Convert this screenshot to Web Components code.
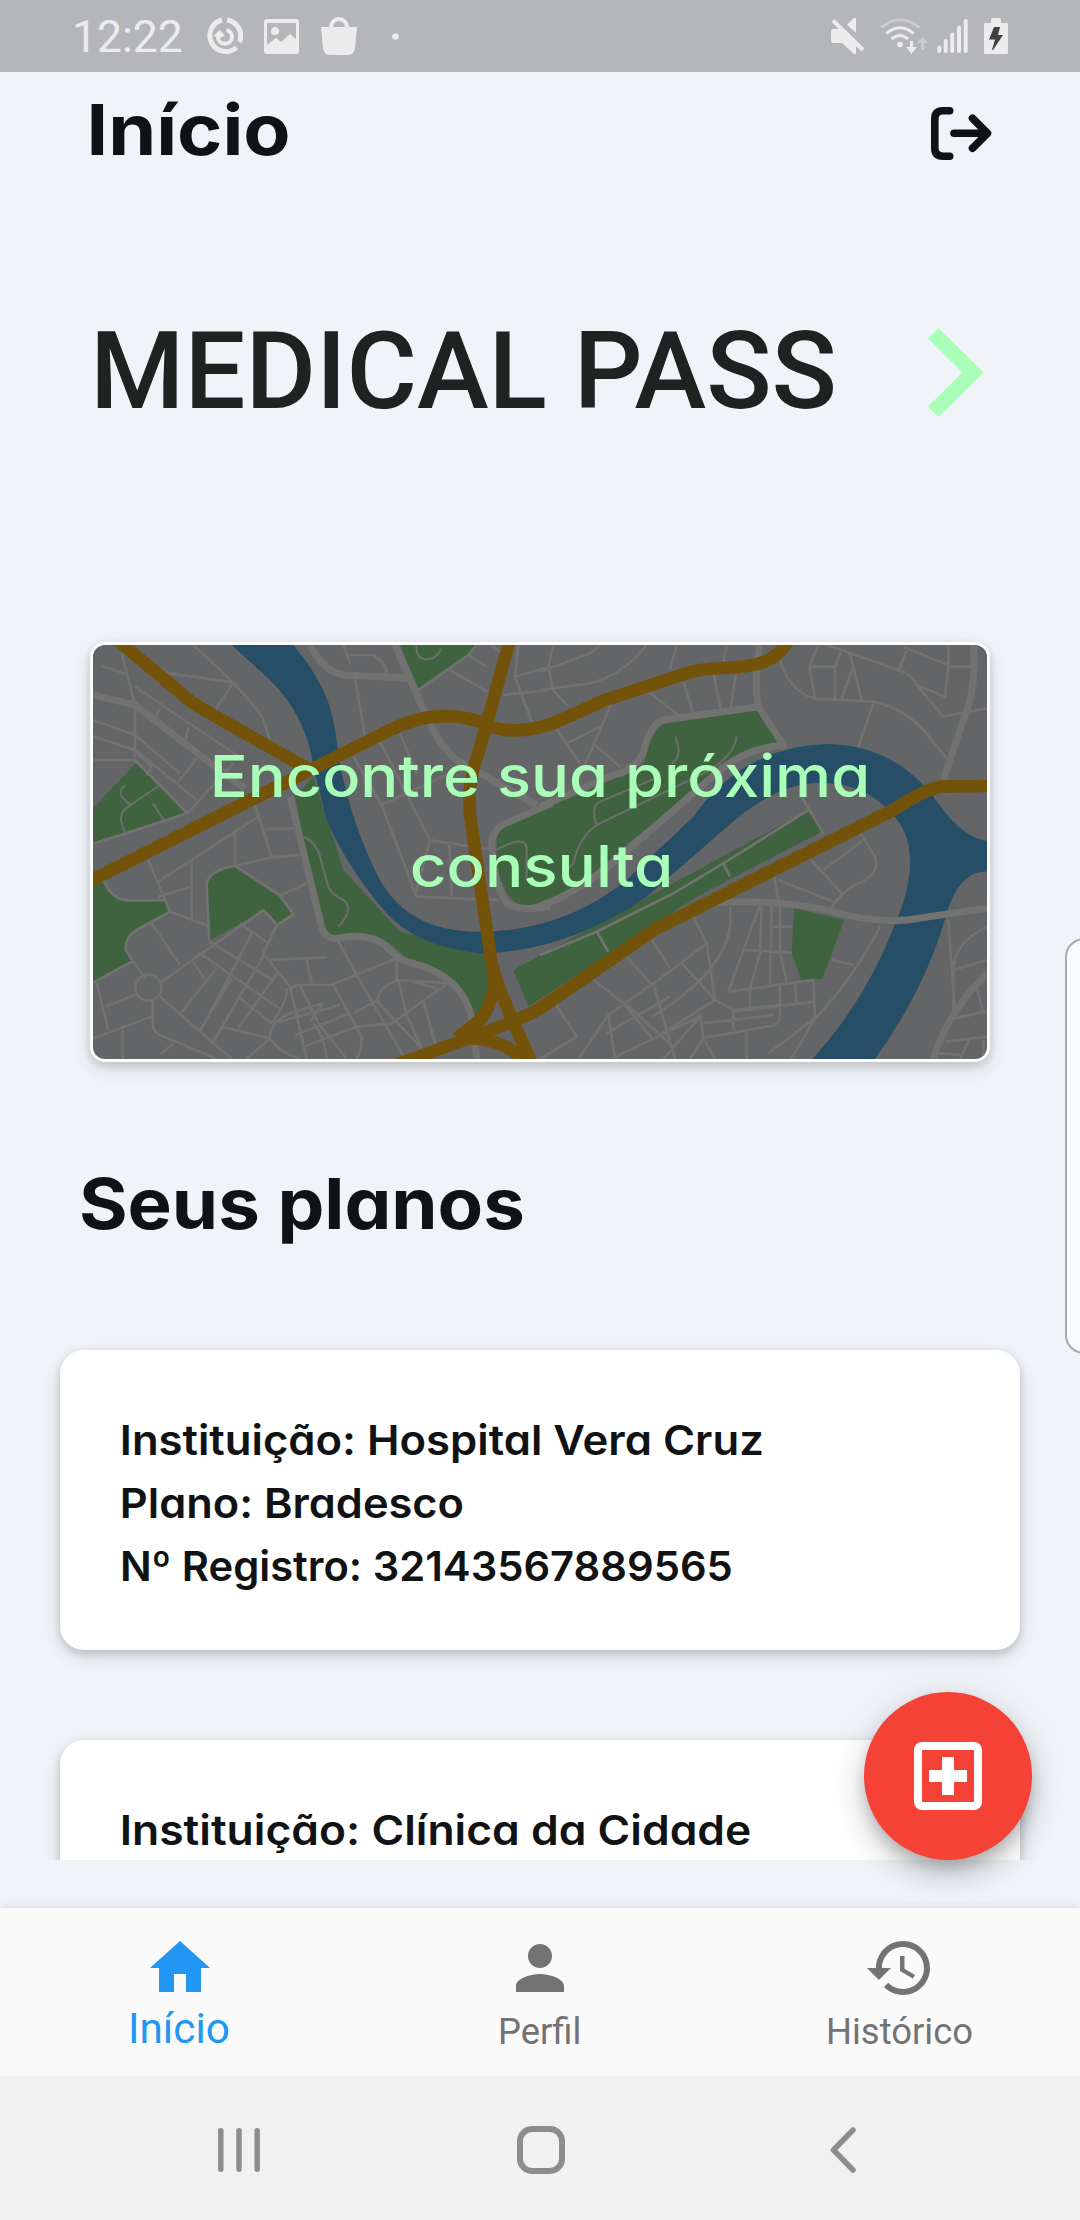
<!DOCTYPE html>
<html lang="pt-BR">
<head>
<meta charset="utf-8">
<title>Medical Pass</title>
<style>
html,body{margin:0;padding:0;background:#f0f3f8}
body{width:1080px;height:2220px;overflow:hidden;font-family:Inter,"Noto Sans",sans-serif;color:#111213}
</style>
</head>
<body>
<medical-app></medical-app>
<script>
const define=(name,html,init)=>{
  const t=document.createElement('template');
  t.innerHTML=html;
  customElements.define(name,class extends HTMLElement{
    constructor(){super();this.attachShadow({mode:'open'}).append(t.content.cloneNode(true));}
    connectedCallback(){if(init)init.call(this,this.shadowRoot);}
  });
};

/* One line of text whose drawn width is set by the "ink" attribute. */
const pen=document.createElement('canvas').getContext('2d');
define('fit-text',`<style>:host{display:block;white-space:nowrap;font-feature-settings:"cv11"}
span{display:inline-block;transform-origin:0 50%}</style><span><slot></slot></span>`,function(root){
  const s=root.querySelector('span'),c=getComputedStyle(s),target=+this.getAttribute('ink');
  const txt=root.querySelector('slot').assignedNodes({flatten:true}).map(n=>n.textContent).join('').trim();
  if(!txt||!target)return;
  pen.font=`${c.fontWeight} ${c.fontSize} ${c.fontFamily}`;
  const a=pen.measureText(txt[0]),b=pen.measureText(txt[txt.length-1]);
  const lsb=-a.actualBoundingBoxLeft,rsb=b.width-b.actualBoundingBoxRight;
  const k=target/(s.getBoundingClientRect().width-lsb-rsb);
  this.style.width=target+'px';
  s.style.transform=`translateX(${-lsb*k}px) scaleX(${k})`;
});

define('status-bar',`<style>
:host{display:flex;box-sizing:border-box;height:72px;background:#b5b6ba;color:#ececec;padding:0 72px 0 75px;justify-content:space-between;align-items:center;font:400 45px/72px Roboto,sans-serif}
div{display:flex;align-items:center}svg{display:block;fill:currentColor}
fit-text{padding-top:1px}
.l svg:nth-of-type(1){margin-left:24px}.l svg:nth-of-type(2){margin-left:21px}.l svg:nth-of-type(3){margin-left:22px}.l svg:nth-of-type(4){margin-left:35px}
.r svg:nth-of-type(2){margin-left:15px}.r svg:nth-of-type(3){margin-left:9px}.r svg:nth-of-type(4){margin-left:15px}
</style>
<div class="l"><fit-text ink="106.500">12:22</fit-text>
<svg width="37" height="38" viewBox="0 0 37 38"><g fill="none" stroke="currentColor"><path stroke-width="5" d="M16 3A16 16 0 1 0 30.5 30.500M21 3A16 16 0 0 1 33.500 25"/><path stroke-width="4" d="M20.500 13A7 7 0 1 1 12 20"/></g><path d="M7.500 19 13.500 13 19 18.500 14 21Z"/></svg>
<svg width="35" height="35" viewBox="0 0 35 35"><path fill-rule="evenodd" d="M3 0h29a3 3 0 0 1 3 3v29a3 3 0 0 1-3 3H3a3 3 0 0 1-3-3V3a3 3 0 0 1 3-3zM3 4v22l9-7 5 4 9-8 6 5V4z"/><circle cx="11" cy="12" r="4"/></svg>
<svg width="36" height="38" viewBox="0 0 36 38"><path d="M0 10h36l-2 21q-1 7-7 7H9q-6 0-7-7z"/><path d="M10 12V10a8 8 0 0 1 16 0v2" fill="none" stroke="currentColor" stroke-width="4"/></svg>
<svg width="7" height="7" viewBox="0 0 7 7"><circle cx="3.500" cy="3.500" r="3.300"/></svg></div>
<div class="r">
<svg width="34" height="36" viewBox="0 0 34 36"><path d="M2 11h7l16 16v9h-2L11 25H2q-2 0-2-2V13q0-2 2-2zM23 0h2v15l-9-8.500z"/><path d="M4 .5 34 30" stroke="#b5b6ba" stroke-width="4"/><path d="M2 2.500 32 32" stroke="currentColor" stroke-width="4"/></svg>
<svg width="48" height="36" viewBox="0 0 48 36"><g fill="none" stroke="currentColor" stroke-width="3"><path stroke="#cbccce" d="M1 9.500Q20-6 39.500 9.500"/><path d="M6.500 15.500Q20 4 33.500 15.500M11.500 21Q20 14 28 21"/></g><circle cx="20" cy="26.500" r="2.700"/><path d="M30 23h3v6h4l-5.500 7L26 29h4z"/><path fill="#cbccce" d="M41 32h3v-7h4l-5.500-6.500L37 25h4z"/></svg>
<svg width="32" height="34" viewBox="0 0 32 34"><path stroke="currentColor" stroke-width="4" stroke-linecap="round" d="M2.200 28.500v3.500M8.700 22v10M15.200 15.500v16.500M22 8.500v23.500M28.700 2v30"/></svg>
<svg width="24" height="36" viewBox="0 0 24 36"><path d="M7 1.500Q7 0 8.500 0h7Q17 0 17 1.500V5h5.500Q24 5 24 6.500v28q0 1.500-1.500 1.500h-21Q0 36 0 34.500v-28Q0 5 1.500 5H7z"/><path fill="#404040" d="M10 9h6l-2 8h5L9 32h-1l3-10.500H5z"/></svg>
</div>`);

define('page-header',`<style>
:host{display:flex;justify-content:space-between;align-items:center;box-sizing:border-box;height:100px;margin-top:8px;padding:0 88px 0 91px;font:700 70px/100px Inter,sans-serif}
svg{display:block;margin-top:7px}
</style><fit-text ink="197.500"><slot></slot></fit-text>
<svg width="61" height="53" viewBox="0 0 61 53" fill="none" stroke="#111213" stroke-width="7.600" stroke-linecap="round" stroke-linejoin="round"><path d="M18.700 3.800H12Q3.800 3.800 3.800 12V41Q3.800 49.200 12 49.200H18.700M23 26.300H56M41.500 11.300 56.500 26.300 41.500 41.300"/></svg>`);

define('brand-row',`<style>
:host{display:flex;justify-content:space-between;align-items:center;margin-top:131px;height:120px;padding:0 96px 0 97px;color:#202221;font:500 108px/120px Roboto,sans-serif}
svg{display:block;margin-top:2px}
</style><fit-text ink="736.500"><slot></slot></fit-text>
<svg width="56" height="89" viewBox="0 0 56 89"><path fill="#aaffb8" d="M10.500 0 56 44.500 10.500 89 0 78.500 34.500 44.500 0 10.500Z"/></svg>`);

define('city-map',`<style>:host{display:block}svg{display:block}
.g{fill:#3f633f}.w{fill:#264f67}.m{fill:none;stroke:#727271;stroke-width:8}.b{fill:none;stroke:#727271;stroke-width:21;stroke-linejoin:round}.o{fill:none;stroke:#735309;stroke-width:38}.t{fill:none;stroke:#6d6f6c;stroke-width:6}
</style><svg width="894" height="414" viewBox="39 45 2682 1242" preserveAspectRatio="none">
<rect x="39" y="45" width="2682" height="1242" fill="#646567"/>
<path class="g" d="M39 535 167 400 322 550 39 640ZM39 765 75 755Q95 810 145 811H255L270 845 170 900Q135 920 137 960L155 995 39 1058ZM388 932 380 765Q385 720 465 708L600 797 640 853 592 885 553 840ZM645 500 700 440 790 720 960 905 1210 950 1245 1080 1190 1170Q1130 1020 980 990 920 910 830 915L760 925 725 890ZM960 45H1190L1165 75 1015 175ZM1250 620Q1250 590 1290 575L1690 405Q1715 290 1760 280L2040 240 2095 340Q2000 350 1920 420L1620 660Q1480 800 1330 830 1270 810 1250 700ZM1300 1020 2185 540 2225 605 1850 800 1345 1130ZM2142 835 2292 870 2228 1045 2165 1052 2135 968Z"/>
<path class="w" d="M455 45H640Q750 175 765 300L785 430Q830 620 900 750 985 900 1180 905 1440 910 1640 750L1840 560Q1990 350 2240 342 2440 345 2560 500 2645 625 2721 632V725Q2640 720 2600 850 2540 1070 2385 1287H2197Q2360 1110 2450 870 2540 650 2430 545 2340 450 2200 460 2080 465 1930 600L1700 800Q1460 965 1200 970 1010 950 920 850 800 710 740 570L700 410Q680 260 570 150Z"/>
<g class="m">
<path d="M340 45Q530 220 550 270L575 345M235 125 460 157 400 250M65 108 140 133M125 70 165 225V400M39 270 165 315 300 430M39 318 170 362 350 510M39 390H165L322 550M165 170 290 255 485 385M240 235 225 262M325 292 315 335M350 385 295 455M170 370 215 410 200 435M39 642 322 550 460 400M525 525 575 680M535 560 235 755M465 600V708M335 690V865M205 690 270 845 385 888M235 800 330 770M660 675 575 682 465 708M680 760 600 797M555 598 645 595M70 750Q95 810 145 811H255M270 845 170 900Q135 920 137 960L195 1045M215 880 300 1005M39 1058 155 995M245 1055 550 840M388 932 380 765Q385 720 465 708L600 797 640 853 592 885 550 970 630 1070M550 840 592 885"/>
<circle cx="205" cy="1073" r="39"/>
<path d="M240 1100 455 1287M75 1130 170 1093M50 1060 85 1200M39 1225 215 1160M128 1200V1287M218 1112V1180Q218 1205 240 1215L370 1270 410 1287M240 1275 280 1240M388 935 578 1050M355 967 605 1140M335 990 380 1055M410 1015 305 1145M515 910 363 1200M455 1045 360 1200M590 885 550 970M595 1025 475 1195M555 970 400 1235M480 880 560 937M480 1105 575 1180M422 1190 570 1225 500 1287M560 990 740 982M680 990 695 1060M770 925 830 1035 975 1287M755 1065 950 985V1050L1110 1060M630 1075 650 1065H760L845 1220Q845 1260 830 1287M630 1070 680 1287M660 1065 715 1180 800 1287M570 1225Q565 1180 630 1150L730 1120M620 1075Q625 1110 575 1180M580 1180 780 1125M645 1215 810 1150M670 1250 830 1190 935 1180 1110 1055M570 1225Q600 1270 660 1287M820 1150 890 1112 1025 1255M890 1110Q910 1050 980 1050L1070 1075M955 1050 980 1155 1025 1255M1030 1112 1065 1240M730 1120 690 1175M740 1287Q735 1220 700 1180"/>
<path d="M825 145 855 320M805 75H880Q920 100 920 130M790 45 810 100M820 380 905 525 1010 800 1255 810M900 335 1050 630 1240 660M1050 630 1005 800M1108 645 1115 800M905 525 1110 430M960 310 1010 430M1110 120 1230 190M1165 75 1220 110M1235 45 1260 65M1270 195 1410 180M1315 45 1305 140 1355 275M1305 140 1410 110M1015 180 1165 75 1190 45"/>
<g transform="translate(1380 0)"><path d="M40 45 25 110 40 180 85 230M0 180 150 160Q250 135 320 45M0 125 150 70 180 45M410 45 390 120M560 45 550 95M325 185 415 255M430 155 460 250M520 130 543 240M588 125 573 235M45 290 120 400M215 220 110 460M80 340 180 290M165 345 240 410M835 45 808 110 825 205M810 110H885L905 60M885 105V205M940 110 905 205M930 70 965 210M860 45 1090 125Q1120 140 1130 165L1210 260 1340 235M1100 60 1075 125M1090 50 1225 105 1215 200 1130 165M1225 45V110H1310M720 90Q745 180 820 205L1000 215Q1090 235 1150 300L1220 385M1000 220 955 350"/>
<path d="M550 700 805 540M785 500 850 610M550 700 570 740M170 905 205 965M0 975 170 905 400 790 550 700M955 600 1005 680Q1020 730 965 755 905 780 870 840M970 630 850 720M800 675 905 790M700 720 715 810M715 750 880 815M455 850 500 940 525 1110 580 1140 720 1125M570 830Q580 920 530 990 470 1080 335 1160M330 920 390 1015M255 975 335 1065 500 940M150 1040 250 1120 340 1230M45 1120 110 1220 0 1287M115 1287 205 1155 340 1060 405 1287M205 1155 225 1287M425 1000 525 1110 335 1230M660 825 610 960 565 1085M665 820 660 970 630 1075V1130M695 820 690 1060M720 830V965L740 1055M700 890H755M610 960 755 968M565 1085 820 1050 825 1160Q780 1250 750 1287M720 1065V1160Q715 1190 680 1190L485 1225M765 1060 770 1125M580 1140V1200M580 1145 820 1115M480 1150 490 1225 525 1287M620 1205V1287M485 1180 700 1155M490 1225 450 1287M480 1160 370 1287M685 1270 830 1160Q930 1060 1020 890M875 990 940 1005M1225 870 1245 1150M1340 890Q1240 940 1240 1020V1150M1240 1020 1340 990M1245 1165 1340 1145M1310 1070 1330 1150M1215 1235 1340 1220M1290 1225 1260 1287M1330 1230V1287M1190 1270 1270 1275M200 1210 390 1100M215 1285 480 1160M255 1120 400 1250"/></g></g>
<g class="b"><path d="M39 195 165 225 405 410 495 475M690 45Q735 130 795 135L985 145M945 45 1040 260Q1080 350 1130 390L1370 525M1415 520 1290 575Q1240 590 1235 640 1240 760 1280 820 1320 845 1410 830M1360 835Q1480 800 1620 680L1920 420Q2000 355 2110 345L2035 230 1750 270Q1710 280 1690 370 1650 430 1600 435L1380 530M2035 230Q2020 140 2040 45M630 500 720 870Q730 930 770 925 870 905 920 950 950 990 1000 1000 1160 1040 1180 1190L1190 1287M1870 820Q2080 805 2240 840 2370 880 2480 870L2721 835M2680 45Q2690 180 2650 270L2590 450M2560 1287Q2600 1150 2721 1030"/></g>
<g class="t"><path d="M137 465Q115 480 125 500L152 525 235 468M152 525Q115 545 125 580L135 610M218 520 252 570M670 620Q715 640 725 700L745 770Q755 795 790 810 825 835 775 890M1010 45Q1005 90 1045 88 1070 85 1085 55M1250 660Q1325 615 1340 650V740M1785 320Q1810 380 1775 400M1970 320Q1960 390 1850 440L1560 580Q1500 610 1480 700L1450 730M1550 585Q1530 530 1560 515L1740 440"/></g>
<g class="o"><path d="M82 5 315 200Q340 222 390 250L690 420M25 755 920 305Q1060 230 1200 275 1290 325 1420 280L1570 212 1820 130C1910 95 2060 145 2122 35M1291 25 1195 370Q1155 470 1175 590L1235 1000Q1245 1060 1360 1310M1240 1010Q1255 1100 1200 1170L1130 1225M930 1312 1180 1220Q1330 1165 1380 1135L1730 895 2440 540Q2530 480 2580 470L2730 468M1170 1225Q1270 1225 1345 1300"/></g>
</svg>`);

define('map-card',`<style>
:host{display:grid;box-sizing:border-box;margin:211px 90px 0;height:420px;border:3px solid #fff;border-radius:15px;background:#fff;box-shadow:0 3px 9px rgba(0,0,0,.13),0 7px 18px rgba(0,0,0,.12);color:#aaffb8;font:500 58px/90px Inter,sans-serif}
city-map,div{grid-area:1/1}city-map{border-radius:12px;overflow:hidden}
div{position:relative;display:flex;flex-direction:column;align-items:center;padding-top:86px}
</style><city-map></city-map><div><fit-text ink="652">Encontre sua próxima</fit-text><fit-text ink="257">consulta</fit-text></div>`);

define('section-title',`<style>:host{display:block;margin:92px 0 0 81px;height:100px;font:700 70px/100px Inter,sans-serif}</style><fit-text ink="441.500"><slot></slot></fit-text>`);

define('plan-card',`<style>
:host{display:flex;flex-direction:column;flex:none;box-sizing:border-box;height:300px;padding:59px 62.500px;background:#fff;border-radius:24px;box-shadow:0 3px 9px rgba(0,0,0,.14),0 7px 18px rgba(0,0,0,.13);font:560 41px/63px Inter,sans-serif}
</style><slot></slot>`);

define('plan-list',`<style>
:host{display:flex;flex-direction:column;gap:90px;box-sizing:border-box;height:606px;padding:96px 60px 0;overflow:hidden}
</style><slot></slot>`);

define('add-button',`<style>
:host{position:absolute;left:864px;top:1692px;width:168px;height:168px;border-radius:50%;background:#f44336;display:flex;align-items:center;justify-content:center;box-shadow:0 9px 15px -3px rgba(0,0,0,.2),0 18px 30px rgba(0,0,0,.14),0 3px 40px rgba(0,0,0,.1)}
</style><svg width="68" height="68" viewBox="0 0 68 68"><rect x="4" y="4" width="60" height="60" rx="4" fill="none" stroke="#fff" stroke-width="8"/><path fill="#fff" d="M28 15h12v13h13v12H40v13H28V40H15V28h13z"/></svg>`);

define('nav-item',`<style>
:host{display:flex;flex:1;flex-direction:column;align-items:center;padding-top:24px;color:#737373;font:400 36px/48px Roboto,sans-serif}
:host([active]){color:#2196f3;font-size:42px}
svg{display:block;width:72px;height:72px;fill:currentColor}
.label{padding-top:4px}:host([active]) .label{padding-top:1px}
</style><svg viewBox="0 0 24 24"><path></path></svg><div class="label"><slot></slot></div>`,function(root){
  root.querySelector('path').setAttribute('d',this.getAttribute('icon'));
});

define('bottom-nav',`<style>
:host{display:flex;height:168px;margin-top:48px;background:#fafafa;box-shadow:0 -2px 9px rgba(0,0,0,.09)}
</style>
<nav-item active icon="M10 20v-6h4v6h5v-8h3L12 3 2 12h3v8z"><fit-text ink="98">Início</fit-text></nav-item>
<nav-item icon="M12 12c2.210 0 4-1.790 4-4s-1.790-4-4-4-4 1.790-4 4 1.790 4 4 4zm0 2c-2.670 0-8 1.340-8 4v2h16v-2c0-2.660-5.330-4-8-4z"><fit-text ink="79.500">Perfil</fit-text></nav-item>
<nav-item icon="M13 3c-4.970 0-9 4.030-9 9H1l3.890 3.890.070.140L9 12H6c0-3.870 3.130-7 7-7s7 3.130 7 7-3.130 7-7 7c-1.930 0-3.680-.790-4.940-2.060l-1.420 1.420C8.270 19.990 10.510 21 13 21c4.970 0 9-4.030 9-9s-4.030-9-9-9zm-1 5v5l4.280 2.540.720-1.210-3.500-2.080V8H12z"><fit-text ink="143.500">Histórico</fit-text></nav-item>`);

define('system-nav',`<style>
:host{display:flex;height:144px;background:#f1f1f1;align-items:center;padding:4px 0 0 218px;box-sizing:border-box}
svg{display:block;fill:none;stroke:#8d8d8d;stroke-linecap:round;stroke-linejoin:round}
svg:nth-of-type(2){margin-left:257px}svg:nth-of-type(3){margin-left:265px}
</style>
<svg width="42" height="44" viewBox="0 0 42 44" stroke-width="5.500"><path d="M2.800 2.800v38.400M21 2.800v38.400M39.200 2.800v38.400"/></svg>
<svg width="48" height="48" viewBox="0 0 48 48" stroke-width="6"><rect x="3" y="3" width="42" height="42" rx="12"/></svg>
<svg width="26" height="46" viewBox="0 0 26 46" stroke-width="5.500"><path d="M23 3 3.500 23 23 43"/></svg>`);

define('edge-handle',`<style>:host{position:absolute;left:1065px;top:938px;width:40px;height:416px;box-sizing:border-box;border:2px solid #a9abae;border-radius:19px;background:#fbfcfe}</style>`);

define('medical-app',`<style>
:host{display:flex;flex-direction:column;position:relative;width:1080px;height:2220px;overflow:hidden;background:#f0f3f8}
</style>
<status-bar></status-bar>
<page-header>Início</page-header>
<brand-row>MEDICAL PASS</brand-row>
<map-card></map-card>
<section-title>Seus planos</section-title>
<plan-list>
<plan-card><fit-text ink="638.500">Instituição: Hospital Vera Cruz</fit-text><fit-text ink="340">Plano: Bradesco</fit-text><fit-text ink="608">Nº Registro: 32143567889565</fit-text></plan-card>
<plan-card><fit-text ink="627">Instituição: Clínica da Cidade</fit-text></plan-card>
</plan-list>
<bottom-nav></bottom-nav>
<system-nav></system-nav>
<add-button></add-button>
<edge-handle></edge-handle>`);
</script>
</body>
</html>
